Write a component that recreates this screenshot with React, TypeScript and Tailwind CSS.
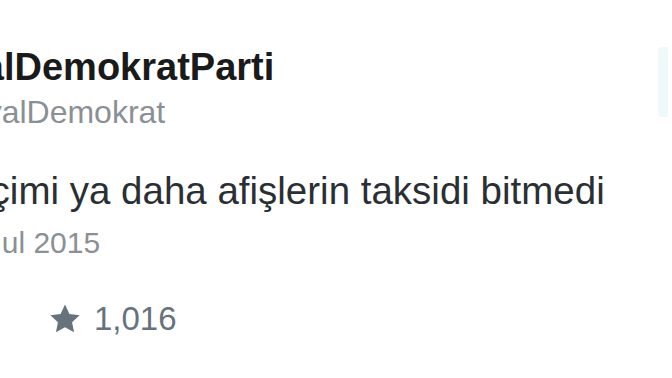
function App() {
    const tweet = {
        name: 'SosyalDemokratParti',
        handle: '@SosyalDemokrat',
        text: 'Ne seçimi ya daha afişlerin taksidi bitmedi',
        date: '12 Jul 2015',
        retweets: '1,204',
        likes: '1,016',
    };
    return (
        <div
            className="w-[672px] h-[378px] overflow-hidden bg-white pt-[45px]"
            style={{ fontFamily: '"Liberation Sans", Arial, sans-serif' }}
        >
            {/* Header */}
            <div className="flex items-start justify-between">
                <div className="flex flex-col whitespace-nowrap">
                    <h1 className="ml-[-108px] text-[38px] leading-[44px] font-bold text-[#1a1a1a]">
                        {tweet.name}
                    </h1>
                    <h2 className="ml-[-102px] mt-[3px] text-[32px] leading-[40px] text-[#8a9096]">
                        {tweet.handle}
                    </h2>
                </div>
                <div className="mt-[2px] mr-[4px] w-[10px] h-[70px] bg-[#eff9fc] rounded-l-sm" />
            </div>

            {/* Tweet body */}
            <p className="ml-[-110px] mt-[35px] whitespace-nowrap text-[38.5px] leading-[48px] text-[#2a2f33]">
                {tweet.text}
            </p>
            <p className="ml-[-55px] mt-[10px] whitespace-nowrap text-[30px] leading-[36px] text-[#8a9096]">
                {tweet.date}
            </p>

            {/* Stats */}
            <div className="mt-[38px] flex items-center h-[40px] whitespace-nowrap">
                <span className="ml-[-80px] w-[84px] text-[32px] leading-[40px] text-[#e6e8ea]">
                    {tweet.retweets}
                </span>
                <svg
                    className="ml-[43px] w-[36px] h-[34px]"
                    viewBox="0 0 24 24"
                    fill="#66737d"
                >
                    <path d="M12 1.8l3.1 6.6 7.2.9-5.3 5 1.4 7.1L12 17.9l-6.4 3.5L7 14.3l-5.3-5 7.2-.9z" />
                </svg>
                <span className="ml-[11px] text-[33px] leading-[40px] text-[#66737d]">
                    {tweet.likes}
                </span>
            </div>
        </div>
    );
}

export default App;
